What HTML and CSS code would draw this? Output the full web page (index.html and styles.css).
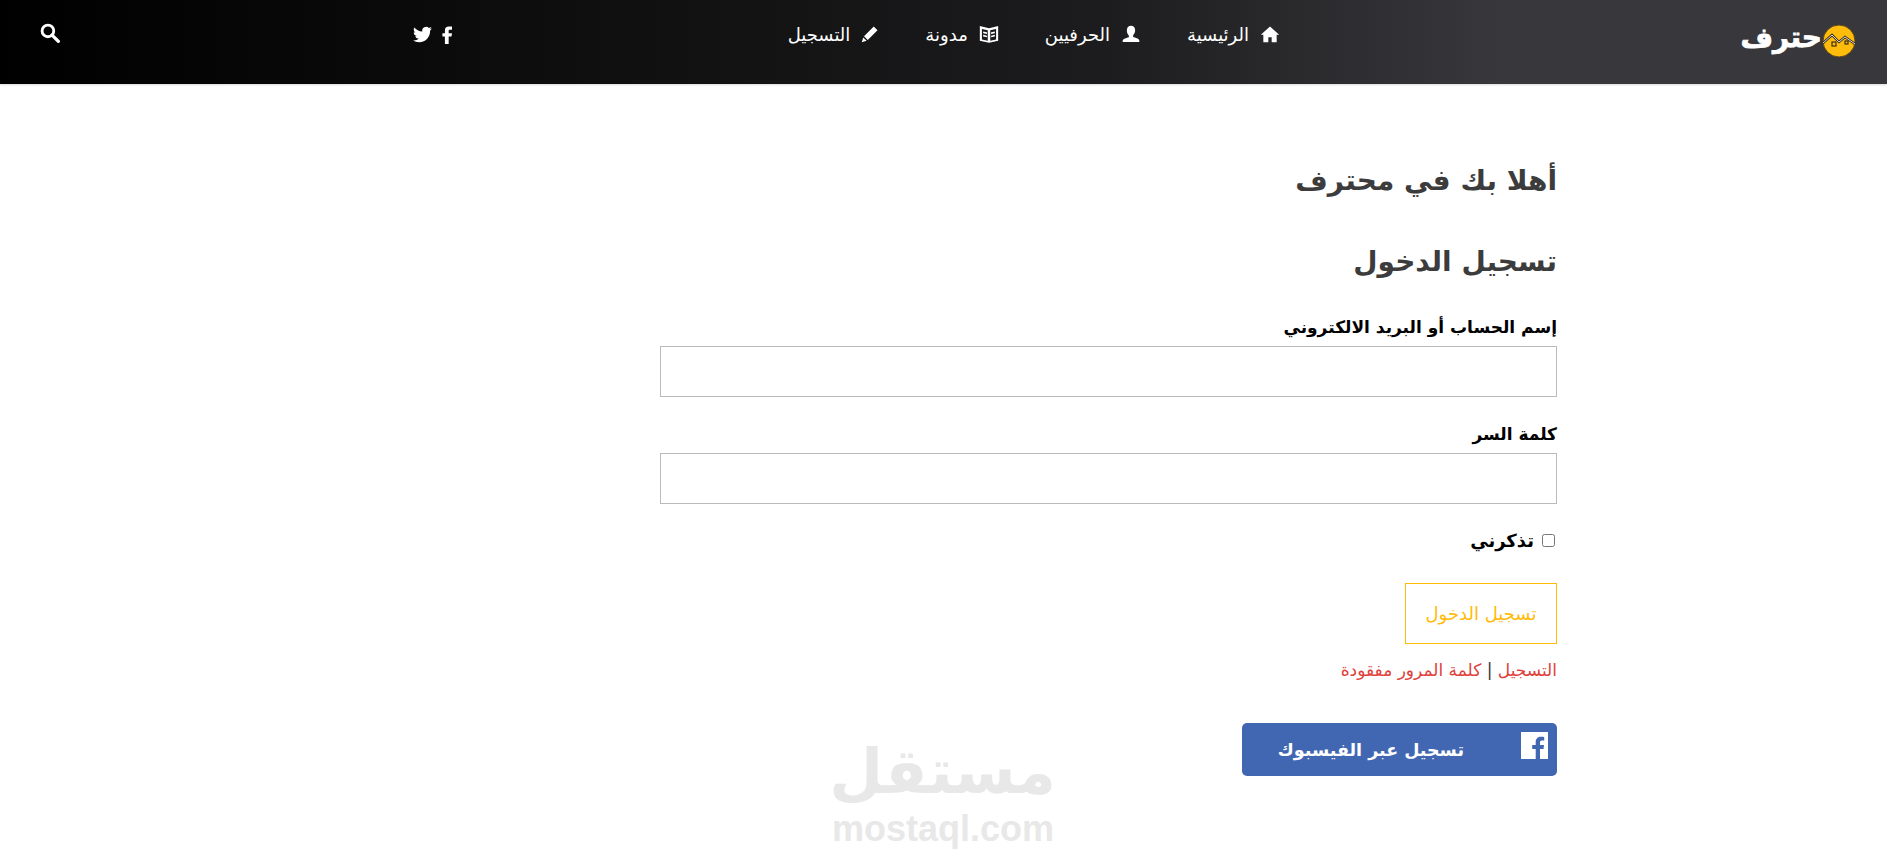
FILE: index.html
```html
<!DOCTYPE html>
<html lang="ar" dir="rtl">
<head>
  <meta charset="UTF-8" />
  <title>تسجيل الدخول</title>
  <link rel="stylesheet" href="styles.css">
</head>
<body>
  <header class="topbar">
    <a class="logo" href="#">
      <svg class="logo-mark" viewBox="0 0 34 34" xmlns="http://www.w3.org/2000/svg">
        <circle cx="17" cy="17" r="16" fill="#ffbc0a" stroke="#5a4420" stroke-width="1"/>
        <path d="M1 19l9-8 7 7 6-5 10 7" fill="none" stroke="#3b2f1a" stroke-width="2.400"/>
        <path d="M1 19l9-8 7 7 6-5 10 7" fill="none" stroke="#fff" stroke-width="0.800"/>
        <rect x="10" y="18" width="4" height="4" fill="none" stroke="#3b2f1a" stroke-width="1.200"/>
        <rect x="23" y="17" width="3" height="3" fill="none" stroke="#3b2f1a" stroke-width="1.200"/>
      </svg>
      <span class="logo-text">حترف</span>
    </a>

    <nav class="mainnav">
      <a href="#">
        <svg class="icon" viewBox="0 0 24 24"><path d="M12 3L1 13h3v9h6v-6h4v6h6v-9h3z"/></svg>
        الرئيسية
      </a>
      <a href="#">
        <svg class="icon" viewBox="0 0 24 24"><path d="M12 2c3.200 0 5 2.400 5 5.500 0 2.500-1.100 4.500-2.400 5.700v2.300c2.500 1 7.400 1.800 7.400 4.500v1.500H2V20.500c0-2.700 4.900-3.500 7.400-4.500v-2.300C8.100 12.500 7 10.500 7 7.500 7 4.400 8.800 2 12 2z"/></svg>
        الحرفيين
      </a>
      <a href="#">
        <svg class="icon" viewBox="0 0 24 24"><path fill-rule="evenodd" d="M1 2.500l11 2.500 11-2.500V20l-11 2.500L1 20zM3.500 6v12.500l7 1.500V7.500zM20.500 6l-7 1.500V20l7-1.500zM5 9l4.500 1v2L5 11zM5 13l4.500 1v2L5 15zM19 9v2l-4.500 1v-2zM19 13v2l-4.500 1v-2z"/></svg>
        مدونة
      </a>
      <a href="#">
        <svg class="icon icon-small" viewBox="0 0 24 24"><path d="M17 2l5 5L9 20l-5-5zM3 16.500L7.500 21 1 23z"/></svg>
        التسجيل
      </a>
    </nav>

    <div class="social">
      <a href="#"><svg class="icon" viewBox="0 0 24 24"><path d="M14 3h4v4h-3c-.6 0-1 .4-1 1v3h4l-.6 4H14v9H9.500v-9H6.500v-4h3V7.500C9.500 4.500 11.300 3 14 3z"/></svg></a>
      <a href="#"><svg class="icon icon-tw" viewBox="0 0 24 24"><path d="M23.950 4.570a10 10 0 0 1-2.820.78 4.960 4.960 0 0 0 2.160-2.720c-.95.550-2 .96-3.130 1.190a4.920 4.920 0 0 0-8.380 4.480C7.690 8.090 4.070 6.130 1.640 3.160a4.820 4.820 0 0 0-.66 2.470c0 1.710.87 3.210 2.190 4.100a4.900 4.900 0 0 1-2.230-.62v.06a4.920 4.920 0 0 0 3.950 4.830 5 5 0 0 1-2.210.08 4.940 4.940 0 0 0 4.600 3.420A9.870 9.870 0 0 1 0 19.540a14 14 0 0 0 7.560 2.210c9.050 0 14-7.500 14-13.980 0-.21 0-.42-.02-.63a9.940 9.940 0 0 0 2.410-2.570z"/></svg></a>
    </div>

    <a class="search" href="#">
      <svg viewBox="0 0 24 24"><circle cx="9.500" cy="9.500" r="7" fill="none" stroke="#fff" stroke-width="3.400"/><path d="M14.500 14.500L22 22" stroke="#fff" stroke-width="4" stroke-linecap="round"/></svg>
    </a>
  </header>

  <main class="content">
    <h2 class="welcome">أهلا بك في محترف</h2>
    <h2 class="login-title">تسجيل الدخول</h2>

    <form class="login-form">
      <div class="field">
        <label for="user">إسم الحساب أو البريد الالكتروني</label>
        <input type="text" id="user" />
      </div>
      <div class="field">
        <label for="pass">كلمة السر</label>
        <input type="password" id="pass" />
      </div>
      <label class="remember"><input type="checkbox" /> تذكرني</label>
      <button type="button" class="submit">تسجيل الدخول</button>
      <p class="links"><a href="#">التسجيل</a> | <a href="#">كلمة المرور مفقودة</a></p>
      <a class="fb-btn" href="#">
        <svg class="fb-icon" viewBox="0 0 27 27"><path d="M0 0h27v27H19v-10h3.500l.5-4h-4v-2.500c0-1.200.4-2 2-2h2.200V5c-.4 0-1.700-.2-3.200-.2-3.200 0-5.300 1.900-5.300 5.400V13h-3.500v4h3.500v10H0z" fill="#fff"/></svg>
        <span>تسجيل عبر الفيسبوك</span>
      </a>
    </form>
  </main>

  <div class="watermark">
    <div class="watermark-ar">مستقل</div>
    <div class="watermark-en">mostaql.com</div>
  </div>
</body>
</html>
```

FILE: styles.css
```css
body {
  margin: 0;
  background: #fff;
  font-family: "DejaVu Sans", sans-serif;
  color: #000;
  height: 864px;
  overflow: hidden;
}

a {
  text-decoration: none;
  color: inherit;
}

.topbar {
  display: flex;
  align-items: center;
  height: 84px;
  padding: 0 31px 0 40px;
  box-sizing: border-box;
  background: linear-gradient(to right, #000 0, #0a0a0a 400px, #1c1c1e 1100px, #38383c 1500px);
  box-shadow: 0 1px 2px rgba(0, 0, 0, 0.15);
  color: #fff;
}

.logo {
  display: flex;
  align-items: center;
  width: 114px;
  height: 84px;
  flex-shrink: 0;
}

.logo-mark {
  width: 34px;
  height: 34px;
  flex-shrink: 0;
  margin-top: -3px;
}

.logo-text {
  font-size: 28px;
  font-weight: bold;
  line-height: 1;
  margin-top: -8px;
  -webkit-text-stroke: 0.8px #fff;
  white-space: nowrap;
}

.mainnav {
  display: flex;
  margin-right: 462px;
  margin-top: -16px;
  gap: 46px;
  font-size: 18px;
}

.mainnav a {
  display: flex;
  align-items: center;
  gap: 11px;
  white-space: nowrap;
}

.icon {
  width: 20px;
  height: 20px;
  fill: #fff;
  flex-shrink: 0;
}

.icon-small {
  width: 18px;
  height: 18px;
}

.social {
  display: flex;
  align-items: center;
  gap: 5px;
  margin-right: 331px;
  margin-top: -16px;
}

.social a {
  display: flex;
}

.icon-tw {
  width: 19px;
  height: 19px;
}

.search {
  display: flex;
  margin-right: auto;
  margin-top: -18px;
}

.search svg {
  width: 20px;
  height: 20px;
}

.content {
  width: 897px;
  margin-right: 330px;
  padding-top: 78px;
}

.welcome,
.login-title {
  margin: 0;
  font-size: 28px;
  font-weight: bold;
  color: #3c3c3c;
  line-height: 38px;
}

.login-title {
  margin-top: 43px;
}

.login-form {
  margin-top: 35px;
}

.field {
  margin-bottom: 26px;
}

.field label {
  display: block;
  font-size: 17px;
  font-weight: bold;
  line-height: 22px;
  margin-bottom: 8px;
}

.field input {
  display: block;
  width: 100%;
  height: 51px;
  box-sizing: border-box;
  border: 1px solid #bbb;
  background: #fff;
}

.remember {
  display: flex;
  align-items: center;
  gap: 8px;
  font-size: 18px;
  font-weight: bold;
  height: 34px;
  margin-top: -7px;
}

.remember input {
  margin: 0 2px 0 0;
}

.submit {
  display: block;
  width: 152px;
  height: 61px;
  margin-top: 26px;
  background: #fff;
  border: 1px solid #ffbc0a;
  color: #ffbc0a;
  font-family: inherit;
  font-size: 18px;
}

.links {
  margin: 16px 0 0;
  font-size: 17px;
  line-height: 20px;
  color: #333;
}

.links a {
  color: #e0403a;
}

.fb-btn {
  display: flex;
  align-items: center;
  width: 315px;
  height: 53px;
  margin-top: 43px;
  padding: 0 9px 0 0;
  box-sizing: border-box;
  background: #4267b2;
  border-radius: 5px;
  color: #fff;
  font-size: 17.500px;
  font-weight: bold;
}

.fb-icon {
  width: 27px;
  height: 27px;
  flex-shrink: 0;
  margin-top: -8px;
}

.fb-btn span {
  margin-right: 57px;
  white-space: nowrap;
}

.watermark {
  position: absolute;
  left: 830px;
  top: 733px;
  width: 226px;
  text-align: center;
  color: #e8e8e8;
  font-weight: bold;
}

.watermark-ar {
  font-size: 62px;
  line-height: 78px;
}

.watermark-en {
  font-family: "Liberation Sans", sans-serif;
  font-size: 36px;
  line-height: 42px;
  margin-top: -3px;
}
```
